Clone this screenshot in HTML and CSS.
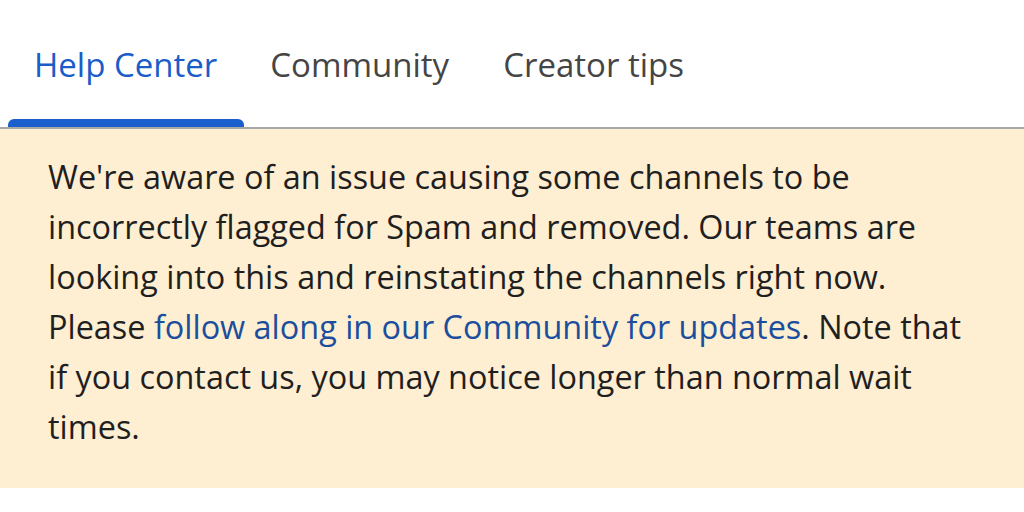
FILE: index.html
```html
<!DOCTYPE html>
<html>
<head>
<meta charset="utf-8">
<link rel="stylesheet" href="styles.css">
</head>
<body>
<nav class="tabs">
  <a class="tab active">Help Center</a>
  <a class="tab">Community</a>
  <a class="tab">Creator tips</a>
</nav>
<div class="banner">
  <p>We're aware of an issue causing some channels to be incorrectly flagged for Spam and removed. Our teams are looking into this and reinstating the channels right now. Please <a class="link">follow along in our Community for updates</a>. Note that if you contact us, you may notice longer than normal wait times.</p>
</div>
</body>
</html>
```
FILE: styles.css
```css
html, body { margin: 0; padding: 0; background: #ffffff; }
body { width: 1024px; height: 512px; overflow: hidden; font-family: "Open Sans", sans-serif; }
.tabs {
  display: flex;
  padding: 0 0 0 8px;
  height: 127px;
  border-bottom: 2px solid #aaa8a6;
  box-sizing: content-box;
}
.tab {
  display: flex;
  align-items: flex-start;
  padding: 42px 28px 0 26px;
  font-size: 33px;
  color: #454545;
  position: relative;
}
.tab.active { color: #1a5cc8; padding-right: 27px; }
.tab.active::after {
  content: "";
  position: absolute;
  left: 0; right: 0; bottom: 0;
  height: 8px;
  background: #1a5fcc;
  border-radius: 6px 6px 0 0;
}
.banner {
  background: #feeed2;
  height: 359px;
  padding: 0 48px;
  box-sizing: border-box;
}
.banner p {
  margin: 0;
  padding-top: 22px;
  font-size: 32.4px;
  line-height: 50px;
  color: #1f1f1f;
  width: 914px;
}
.link { color: #1b4f9d; }
```
